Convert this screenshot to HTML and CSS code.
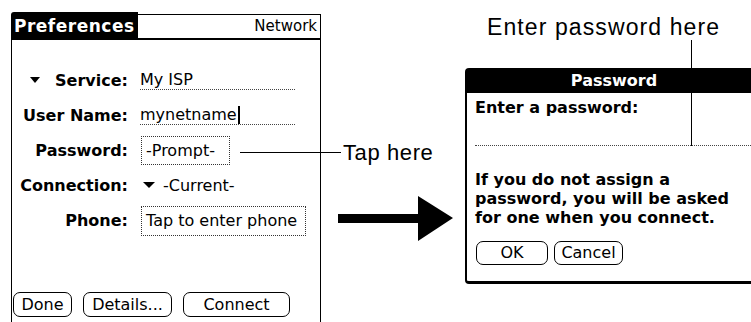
FILE: index.html
```html
<!DOCTYPE html>
<html lang="en">
<head>
    <meta charset="UTF-8">
    <meta name="viewport" content="width=device-width, initial-scale=1.0">
    <title>Network Preferences - Password</title>
    <link rel="stylesheet" href="styles.css">
</head>
<body>

<div id="page">
    <!-- left: the Palm network preferences screen -->
    <div id="device">
        <div class="titlebar">
            <span class="title-tab">Preferences</span>
            <span class="title-right">Network</span>
        </div>

        <div class="form">
            <div class="row">
                <span class="label"><span class="pick"></span>Service:</span>
                <span class="value underline">My ISP</span>
            </div>
            <div class="row">
                <span class="label">User Name:</span>
                <span class="value underline">mynetname<span class="cursor"></span></span>
            </div>
            <div class="row">
                <span class="label">Password:</span>
                <span class="value box box-password">-Prompt-</span>
            </div>
            <div class="row">
                <span class="label">Connection:</span>
                <span class="value trigger"><span class="pick pick-small"></span>-Current-</span>
            </div>
            <div class="row">
                <span class="label">Phone:</span>
                <span class="value box box-phone">Tap to enter phone</span>
            </div>
        </div>

        <div class="buttons">
            <button class="palm-btn btn-done">Done</button>
            <button class="palm-btn btn-details">Details...</button>
            <button class="palm-btn btn-connect">Connect</button>
        </div>
    </div>

    <!-- middle: callout and arrow -->
    <div id="middle">
        <p class="callout">Tap here</p>
        <svg class="arrow" width="116" height="46" viewBox="0 0 116 46">
            <polygon points="0,18 80,18 80,0 115,22 80,45 80,27 0,27" fill="#000"/>
        </svg>
    </div>

    <!-- right: the password dialog -->
    <div id="right">
        <p class="callout callout-top">Enter password here</p>
        <div class="dialog">
            <div class="dialog-title">Password</div>
            <div class="dialog-body">
                <p class="prompt">Enter a password:</p>
                <div class="entry"></div>
                <p class="note">If you do not assign a<br>password, you will be asked<br>for one when you connect.</p>
                <div class="dialog-buttons">
                    <button class="palm-btn btn-ok">OK</button>
                    <button class="palm-btn btn-cancel">Cancel</button>
                </div>
            </div>
        </div>
        <div class="leader leader-down"></div>
    </div>

    <div class="leader leader-tap"></div>
</div>

</body>
</html>
```

FILE: styles.css
```css
body {
    margin: 0;
    background-color: #fff;
    color: #000;
    font-family: 'DejaVu Sans', sans-serif;
}

#page {
    position: relative;
    display: flex;
    align-items: flex-start;
    width: 751px;
    height: 322px;
    overflow: hidden;
}

/* ---------- Palm screen ---------- */

#device {
    flex: none;
    width: 310px;
    height: 330px;
    margin: 12px 0 0 11px;
    display: flex;
    flex-direction: column;
}

.titlebar {
    display: flex;
    height: 28px;
}

.title-tab {
    width: 124px;
    padding-left: 3px;
    background-color: #000;
    color: #fff;
    font-weight: bold;
    font-size: 17px;
    letter-spacing: 0.5px;
    line-height: 28px;
    border-top-left-radius: 3px;
}

.title-right {
    flex: 1;
    margin-top: 2px;
    border-top: 1px solid #000;
    border-right: 1px solid #000;
    border-bottom: 2px solid #000;
    text-align: right;
    padding-right: 3px;
    font-size: 15px;
    line-height: 23px;
}

.form {
    flex: none;
    display: flex;
    flex-direction: column;
    border-left: 1px solid #000;
    border-right: 1px solid #000;
    padding-top: 23px;
}

.row {
    display: grid;
    grid-template-columns: 116px auto;
    column-gap: 12px;
    align-items: center;
    height: 35px;
}

.label {
    text-align: right;
    font-weight: bold;
    font-size: 16px;
}

.value {
    font-size: 16px;
    line-height: 18px;
    justify-self: start;
}

.underline {
    width: 155px;
    border-bottom: 1px dotted #444;
}

.cursor {
    display: inline-block;
    width: 2px;
    height: 18px;
    margin-left: 1px;
    background-color: #000;
    vertical-align: top;
}

.box {
    margin-left: 1px;
    border: 1px dotted #333;
    padding: 0 4px;
    line-height: 27px;
}

.box-password {
    width: 79px;
}

.box-phone {
    width: 155px;
    line-height: 28px;
}

.pick {
    display: inline-block;
    width: 0;
    height: 0;
    border-left: 5px solid transparent;
    border-right: 5px solid transparent;
    border-top: 6px solid #000;
    margin-right: 15px;
    vertical-align: 3px;
}

.trigger {
    margin-left: 3px;
}

.pick-small {
    border-left-width: 6px;
    border-right-width: 6px;
    margin-right: 8px;
}

.buttons {
    flex: 1;
    display: flex;
    align-items: flex-start;
    gap: 11px;
    padding: 54px 0 0 1px;
    border-left: 1px solid #000;
    border-right: 1px solid #000;
}

.palm-btn {
    height: 25px;
    padding: 0;
    border: 1px solid #000;
    border-radius: 7px;
    background-color: #fff;
    color: #000;
    font-family: 'DejaVu Sans', sans-serif;
    font-size: 16px;
    line-height: 22px;
}

.btn-done { width: 59px; }
.btn-details { width: 89px; }
.btn-connect { width: 107px; }

/* ---------- annotations ---------- */

#middle {
    flex: none;
    width: 144px;
    padding-top: 140px;
}

.callout {
    margin: 0;
    font-family: 'Liberation Sans', Arial, sans-serif;
    font-size: 22px;
    letter-spacing: 0.6px;
    line-height: 26px;
}

#middle .callout {
    padding-left: 22px;
}

.arrow {
    display: block;
    margin: 30px 0 0 17px;
}

.leader {
    position: absolute;
    background-color: #000;
}

.leader-tap {
    left: 240px;
    top: 152px;
    width: 101px;
    height: 1px;
}

.leader-down {
    left: 226px;
    top: 40px;
    width: 1px;
    height: 106px;
}

/* ---------- Palm dialog ---------- */

#right {
    position: relative;
    flex: none;
    width: 298px;
    padding-top: 14px;
}

#right .callout-top {
    padding-left: 22px;
    font-size: 23px;
    letter-spacing: 1.1px;
}

.dialog {
    margin-top: 28px;
}

.dialog-title {
    height: 25px;
    background-color: #000;
    color: #fff;
    text-align: center;
    font-weight: bold;
    font-size: 16px;
    line-height: 25px;
    border-top-left-radius: 4px;
}

.dialog-body {
    border-left: 2px solid #000;
    border-bottom: 3px solid #000;
    border-bottom-left-radius: 4px;
    padding: 5px 0 16px 8px;
    font-size: 16px;
}

.prompt {
    margin: 0;
    font-weight: bold;
    line-height: 19px;
}

.entry {
    height: 28px;
    border-bottom: 1px dotted #444;
}

.note {
    margin: 24px 0 0;
    font-weight: bold;
    line-height: 19px;
}

.dialog-buttons {
    display: flex;
    gap: 6px;
    margin-top: 14px;
    padding-left: 1px;
}

.btn-ok { width: 72px; height: 24px; }
.btn-cancel { width: 69px; height: 24px; }
```
